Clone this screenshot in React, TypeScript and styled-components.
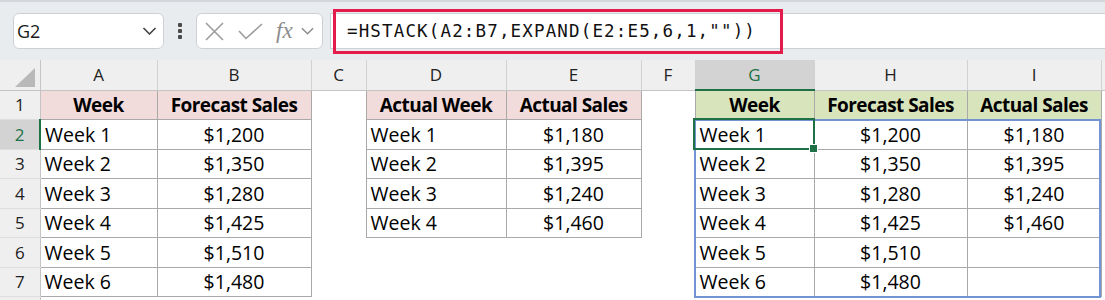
import * as React from "react";
import styled, { createGlobalStyle, css } from "styled-components";

const GREEN = "#1e7145";
const GRID = "#a9a9a9";

const colWidths = [40, 117, 154, 55, 140, 135, 54, 119, 153, 134, 4];
const colNames = ["A", "B", "C", "D", "E", "F", "G", "H", "I", ""];
const HEAD_H = 30;
const ROW_H = 29.5;

type Cell = { text?: string; head?: "pink" | "green"; align?: "left" | "center"; boxed?: boolean };

const weeks = ["Week 1", "Week 2", "Week 3", "Week 4", "Week 5", "Week 6"];
const forecast = ["$1,200", "$1,350", "$1,280", "$1,425", "$1,510", "$1,480"];
const actual = ["$1,180", "$1,395", "$1,240", "$1,460"];

const buildRows = (): Cell[][] => {
  const rows: Cell[][] = [];
  rows.push([
    { text: "Week", head: "pink", boxed: true },
    { text: "Forecast Sales", head: "pink", boxed: true },
    {},
    { text: "Actual Week", head: "pink", boxed: true },
    { text: "Actual Sales", head: "pink", boxed: true },
    {},
    { text: "Week", head: "green", boxed: true },
    { text: "Forecast Sales", head: "green", boxed: true },
    { text: "Actual Sales", head: "green", boxed: true },
    {},
  ]);
  for (let i = 0; i < 6; i++) {
    const inD = i < 4;
    rows.push([
      { text: weeks[i], align: "left", boxed: true },
      { text: forecast[i], align: "center", boxed: true },
      {},
      inD ? { text: weeks[i], align: "left", boxed: true } : {},
      inD ? { text: actual[i], align: "center", boxed: true } : {},
      {},
      { text: weeks[i], align: "left", boxed: true },
      { text: forecast[i], align: "center", boxed: true },
      { text: inD ? actual[i] : "", align: "center", boxed: true },
      {},
    ]);
  }
  // row 8 only peeks in at the bottom edge
  rows.push(colNames.map(() => ({})));
  return rows;
};

const GlobalStyle = createGlobalStyle`
  html, body {
    margin: 0;
    padding: 0;
    background: #ffffff;
    overflow: hidden;
  }
  body {
    font-family: "Open Sans", "Liberation Sans", sans-serif;
  }
`;

const Page = styled.div`
  width: 1105px;
  height: 300px;
  overflow: hidden;
  background: #ffffff;
`;

const Toolbar = styled.div`
  display: flex;
  align-items: center;
  height: 60px;
  box-sizing: border-box;
  border-top: 2px solid #d3d7dc;
  background: #e9ecef;
  padding-left: 13px;
`;

const Box = styled.div`
  display: flex;
  align-items: center;
  height: 36px;
  box-sizing: border-box;
  background: #ffffff;
  border: 1px solid #cdd1d6;
  border-radius: 6px;
`;

const NameBox = styled(Box)`
  width: 151px;
  padding: 0 6px 0 3px;
  justify-content: space-between;
  font-size: 18px;
  color: #1a1a1a;
`;

const Dots = styled.div`
  display: flex;
  flex-direction: column;
  gap: 2px;
  margin-left: 14px;
  span {
    width: 4px;
    height: 4px;
    border-radius: 1px;
    background: #4a4a4a;
  }
`;

const FxBox = styled(Box)`
  width: 127px;
  margin-left: 14px;
  padding-left: 8px;
`;

const FxLabel = styled.span`
  font-family: "Liberation Serif", "DejaVu Serif", serif;
  font-style: italic;
  font-size: 23px;
  color: #8c8c8c;
  margin-left: 13px;
  line-height: 1;
  margin-top: -2px;
`;

const FxChevron = styled.span`
  display: flex;
  margin-left: 8px;
`;

const FormulaBar = styled.div`
  flex: 1;
  margin-left: 7px;
  height: 36px;
  box-sizing: border-box;
  background: #ffffff;
  border: 1px solid #cdd1d6;
  border-right: none;
  display: flex;
  align-items: center;
  padding-left: 2px;
`;

const Highlight = styled.div`
  width: 450px;
  height: 45px;
  box-sizing: border-box;
  border: 3px solid #e31c4c;
  display: flex;
  align-items: center;
  padding-left: 11px;
  font-family: "DejaVu Sans Mono", "Liberation Mono", monospace;
  font-size: 17.5px;
  letter-spacing: 1.15px;
  color: #111;
  white-space: nowrap;
`;

const SheetWrap = styled.div`
  position: relative;
`;

const Sheet = styled.table`
  border-collapse: collapse;
  table-layout: fixed;
  width: 1105px;
`;

const Col = styled.col<{ $w: number }>`
  width: ${(p) => p.$w}px;
`;

const Row = styled.tr<{ $h: number }>`
  height: ${(p) => p.$h}px;
`;

const Corner = styled.th`
  background: #efefef;
  border-right: 1px solid #c4c4c4;
  border-bottom: 1px solid #c4c4c4;
  padding: 0;
  svg {
    display: block;
    margin: 5px 0 0 15px;
  }
`;

const ColHead = styled.th<{ $active?: boolean }>`
  background: ${(p) => (p.$active ? "#d3d3d3" : "#efefef")};
  color: ${(p) => (p.$active ? GREEN : "#222")};
  font-weight: 400;
  font-size: 17px;
  text-align: center;
  padding: 0;
  border-right: 1px solid #d2d2d2;
  border-bottom: ${(p) => (p.$active ? `2px solid ${GREEN}` : "1px solid #c4c4c4")};
`;

const RowHead = styled.th<{ $active?: boolean }>`
  background: ${(p) => (p.$active ? "#d3d3d3" : "#efefef")};
  color: ${(p) => (p.$active ? GREEN : "#222")};
  font-weight: 400;
  font-size: 17px;
  text-align: center;
  padding: 0;
  border-bottom: 1px solid #dedede;
  border-right: ${(p) => (p.$active ? `2px solid ${GREEN}` : "1px solid #c4c4c4")};
`;

const DataCell = styled.td<{ $head?: "pink" | "green"; $align?: "left" | "center"; $boxed?: boolean }>`
  padding: 0 4px;
  font-size: 19.5px;
  color: #000;
  white-space: nowrap;
  overflow: hidden;
  text-align: ${(p) => (p.$head ? "center" : p.$align || "left")};
  ${(p) => p.$boxed && css`border: 1px solid ${GRID};`}
  ${(p) =>
    p.$head &&
    css`
      font-weight: 700;
      font-size: 19px;
      letter-spacing: -0.55px;
    `}
  ${(p) => p.$head === "pink" && css`background: #f2dcdb;`}
  ${(p) => p.$head === "green" && css`background: #d8e4bc;`}
`;

const SpillBorder = styled.div<{ $l: number; $t: number; $w: number; $h: number }>`
  position: absolute;
  left: ${(p) => p.$l}px;
  top: ${(p) => p.$t}px;
  width: ${(p) => p.$w}px;
  height: ${(p) => p.$h}px;
  box-sizing: border-box;
  border: 2px solid #7294d2;
  pointer-events: none;
`;

const Selection = styled.div<{ $l: number; $t: number; $w: number; $h: number }>`
  position: absolute;
  left: ${(p) => p.$l}px;
  top: ${(p) => p.$t}px;
  width: ${(p) => p.$w}px;
  height: ${(p) => p.$h}px;
  box-sizing: border-box;
  border: 2px solid ${GREEN};
  pointer-events: none;
`;

const Handle = styled.span`
  position: absolute;
  right: -5px;
  bottom: -5px;
  width: 7px;
  height: 7px;
  background: ${GREEN};
  border: 1px solid #fff;
`;

const Chevron = ({ w = 14, color = "#444" }: { w?: number; color?: string }) => (
  <svg width={w} height={8} viewBox="0 0 14 8">
    <polyline points="1,1 7,7 13,1" fill="none" stroke={color} strokeWidth="1.6" />
  </svg>
);

const colLeft = (i: number) => colWidths.slice(0, i).reduce((a, b) => a + b, 0);
const rowTop = (r: number) => HEAD_H + (r - 1) * ROW_H;

export default function App() {
  const rows = buildRows();
  const gLeft = colLeft(7);
  const spillW = colWidths[7] + colWidths[8] + colWidths[9];

  return (
    <Page>
      <GlobalStyle />
      <Toolbar>
        <NameBox>
          <span>G2</span>
          <Chevron w={15} />
        </NameBox>
        <Dots>
          <span />
          <span />
          <span />
        </Dots>
        <FxBox>
          <svg width="19" height="19" viewBox="0 0 19 19">
            <path d="M1 1 L18 18 M18 1 L1 18" stroke="#9b9b9b" strokeWidth="1.6" fill="none" />
          </svg>
          <svg width="25" height="17" viewBox="0 0 25 17" style={{ marginLeft: 14 }}>
            <polyline points="1,8 8,15.5 24,1" stroke="#9b9b9b" strokeWidth="1.6" fill="none" />
          </svg>
          <FxLabel>fx</FxLabel>
          <FxChevron>
            <Chevron w={13} color="#8c8c8c" />
          </FxChevron>
        </FxBox>
        <FormulaBar>
          <Highlight>=HSTACK(A2:B7,EXPAND(E2:E5,6,1,""))</Highlight>
        </FormulaBar>
      </Toolbar>
      <SheetWrap>
        <Sheet>
          <colgroup>
            {colWidths.map((w, i) => (
              <Col key={i} $w={w} />
            ))}
          </colgroup>
          <thead>
            <Row $h={HEAD_H}>
              <Corner>
                <svg width="20" height="19" viewBox="0 0 20 19">
                  <polygon points="20,0 20,19 0,19" fill="#b9b9b9" />
                </svg>
              </Corner>
              {colNames.map((n, i) => (
                <ColHead key={i} $active={n === "G"}>
                  {n}
                </ColHead>
              ))}
            </Row>
          </thead>
          <tbody>
            {rows.map((cells, r) => (
              <Row key={r} $h={ROW_H}>
                <RowHead $active={r === 1}>{r < 7 ? r + 1 : ""}</RowHead>
                {cells.map((c, i) => (
                  <DataCell key={i} $head={c.head} $align={c.align} $boxed={c.boxed}>
                    {c.text}
                  </DataCell>
                ))}
              </Row>
            ))}
          </tbody>
        </Sheet>
        <SpillBorder $l={gLeft - 1} $t={rowTop(2) - 1} $w={spillW + 1} $h={ROW_H * 6 + 2} />
        <Selection $l={gLeft - 2} $t={rowTop(2) - 2} $w={colWidths[7] + 3} $h={ROW_H + 3}>
          <Handle />
        </Selection>
      </SheetWrap>
    </Page>
  );
}
